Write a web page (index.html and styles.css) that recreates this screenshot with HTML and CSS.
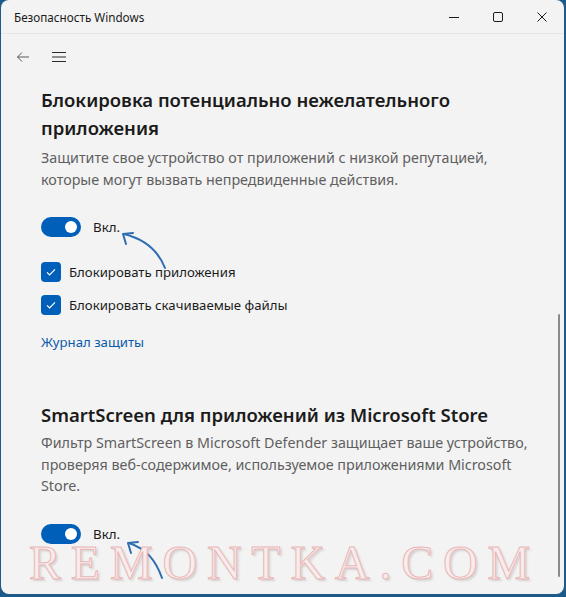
FILE: index.html
```html
<!DOCTYPE html>
<html lang="ru">
<head>
<meta charset="utf-8">
<title>Безопасность Windows</title>
<link rel="stylesheet" href="styles.css">
</head>
<body>
<div class="window">
  <div class="titlebar">
    <span class="title">Безопасность Windows</span>
    <div class="controls">
      <span class="ctl"><svg width="12" height="12" viewBox="0 0 12 12"><path d="M1 6.5h10" stroke="#1b1b1b" stroke-width="1"/></svg></span>
      <span class="ctl"><svg width="12" height="12" viewBox="0 0 12 12"><rect x="1.5" y="1.5" width="9" height="9" rx="1.5" fill="none" stroke="#1b1b1b" stroke-width="1"/></svg></span>
      <span class="ctl"><svg width="12" height="12" viewBox="0 0 12 12"><path d="M1.5 1.5l9 9M10.5 1.5l-9 9" stroke="#1b1b1b" stroke-width="1"/></svg></span>
    </div>
  </div>
  <div class="nav">
    <span class="navbtn"><svg width="14" height="12" viewBox="0 0 14 12"><path d="M13 6H1.5M6 1.5L1.5 6 6 10.5" fill="none" stroke="#5a5a5a" stroke-width="1"/></svg></span>
    <span class="navbtn"><svg width="16" height="12" viewBox="0 0 16 12"><path d="M1 1.5h14M1 6h14M1 10.5h14" stroke="#2a2a2a" stroke-width="1"/></svg></span>
  </div>
  <div class="content">
    <section class="section">
      <h2 class="heading">Блокировка потенциально нежелательного приложения</h2>
      <p class="desc">Защитите свое устройство от приложений с низкой репутацией, которые могут вызвать непредвиденные действия.</p>
      <div class="toggle-row">
        <span class="toggle"><span class="knob"></span></span>
        <span class="toggle-label">Вкл.</span>
      </div>
      <div class="checks">
        <label class="check"><span class="box"><svg width="12" height="12" viewBox="0 0 12 12"><path d="M2 6.3l2.6 2.6L10 3.4" fill="none" stroke="#fff" stroke-width="1.2"/></svg></span>Блокировать приложения</label>
        <label class="check"><span class="box"><svg width="12" height="12" viewBox="0 0 12 12"><path d="M2 6.3l2.6 2.6L10 3.4" fill="none" stroke="#fff" stroke-width="1.2"/></svg></span>Блокировать скачиваемые файлы</label>
      </div>
      <a class="link">Журнал защиты</a>
    </section>
    <section class="section second">
      <h2 class="heading">SmartScreen для приложений из Microsoft Store</h2>
      <p class="desc">Фильтр SmartScreen в Microsoft Defender защищает ваше устройство, проверяя веб-содержимое, используемое приложениями Microsoft Store.</p>
      <div class="toggle-row">
        <span class="toggle"><span class="knob"></span></span>
        <span class="toggle-label">Вкл.</span>
      </div>
    </section>
  </div>
  <div class="scrollbar"></div>
  <svg class="arrows" width="566" height="597" viewBox="0 0 566 597">
    <g fill="none" stroke="#2f6db3" stroke-width="2" stroke-linecap="round" stroke-linejoin="round">
      <path d="M165 268C158 250 144 239 124 234"/>
      <path d="M133 233L123 234 126 244"/>
      <path d="M162 578C156 561 147 549 129 543"/>
      <path d="M138 542L128 543 131 553"/>
    </g>
  </svg>
  <div class="watermark">REMONTKA.COM</div>
</div>
</body>
</html>
```
FILE: styles.css
```css
* { box-sizing: border-box; }
html, body { margin: 0; padding: 0; }
body {
  background: #1c5a8a;
  width: 566px;
  height: 597px;
  overflow: hidden;
  font-family: "Noto Sans", "Open Sans", sans-serif;
}
.window {
  position: relative;
  margin: 0 2px 0 1px;
  height: 594px;
  background: #f3f3f3;
  border-radius: 8px;
  overflow: hidden;
}
.titlebar {
  height: 34px;
  border-bottom: 1px solid #e6e6e6;
  display: flex;
  align-items: center;
  justify-content: space-between;
  padding-left: 13px;
}
.title {
  font-size: 11.7px;
  color: #1b1b1b;
}
.controls { display: flex; height: 100%; }
.ctl {
  width: 44px;
  height: 100%;
  display: flex;
  align-items: center;
  justify-content: center;
}
.nav {
  display: flex;
  align-items: center;
  height: 46px;
  padding-left: 4px;
}
.navbtn {
  width: 36px;
  height: 40px;
  display: flex;
  align-items: center;
  justify-content: center;
}
.content {
  width: 530px;
  padding: 6px 0 0 40px;
}
.heading {
  margin: 0;
  font-size: 18.5px;
  font-weight: 600;
  line-height: 28px;
  color: #1b1b1b;
}
.desc {
  margin: 5px 0 0;
  font-size: 14.3px;
  line-height: 21.5px;
  color: #5f5f5f;
}
.toggle-row {
  display: flex;
  align-items: center;
  gap: 12px;
  margin-top: 27px;
}
.toggle {
  width: 40px;
  height: 20px;
  border-radius: 10px;
  background: #005fb8;
  display: flex;
  align-items: center;
  justify-content: flex-end;
  padding-right: 4px;
}
.knob {
  width: 12px;
  height: 12px;
  border-radius: 50%;
  background: #fff;
}
.toggle-label {
  font-size: 13.3px;
  color: #1b1b1b;
}
.checks {
  margin-top: 25px;
  display: flex;
  flex-direction: column;
  gap: 13px;
}
.check {
  display: flex;
  align-items: center;
  gap: 8px;
  font-size: 13.2px;
  color: #1b1b1b;
}
.box {
  width: 20px;
  height: 20px;
  border-radius: 4px;
  background: #005fb8;
  display: flex;
  align-items: center;
  justify-content: center;
}
.link {
  display: block;
  margin-top: 17px;
  font-size: 13.2px;
  line-height: 20px;
  color: #0a5aa8;
}
.second { margin-top: 49px; }
.second .desc { margin-top: 3px; }
.scrollbar {
  position: absolute;
  left: 557px;
  top: 314px;
  width: 2px;
  height: 263px;
  border-radius: 1px;
  background: #8a8a8a;
}
.arrows {
  position: absolute;
  left: -1px;
  top: 0;
  pointer-events: none;
}
.watermark {
  position: absolute;
  left: 28px;
  top: 545px;
  font-family: "Liberation Serif", serif;
  font-size: 48px;
  line-height: 36px;
  letter-spacing: 9.8px;
  color: #f8ecec;
  -webkit-text-stroke: 1px #e9b7b7;
  text-shadow: 2px 2px 2px rgba(150,150,150,0.35);
}
```
